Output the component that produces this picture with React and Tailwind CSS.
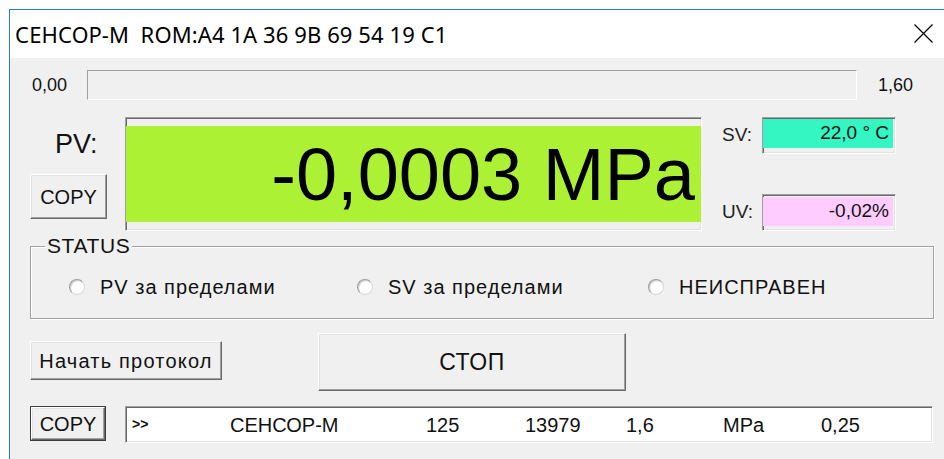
import React from "react";

// classic win32 bevels
const raised =
  "border border-t-white border-l-white border-r-[#696969] border-b-[#696969] shadow-[inset_-1px_-1px_0_#a0a0a0,inset_1px_1px_0_#e3e3e3]";
const sunken =
  "border border-t-[#a0a0a0] border-l-[#a0a0a0] border-r-white border-b-white shadow-[inset_1px_1px_0_#696969,inset_-1px_-1px_0_#e3e3e3]";

const Radio = ({ label, className }) => (
  <div className={`flex items-center ${className}`}>
    <span className="w-[16px] h-[16px] rounded-full bg-white border border-t-[#9a9a9a] border-l-[#9a9a9a] border-r-[#d8d8d8] border-b-[#d8d8d8] shadow-[inset_1px_1px_1px_#c8c8c8]" />
    <span className="ml-[15px] tracking-[1px]">{label}</span>
  </div>
);

const logCols = [
  { text: "СЕНСОР-М", w: "w-[196px]" },
  { text: "125", w: "w-[99px]" },
  { text: "13979", w: "w-[101px]" },
  { text: "1,6", w: "w-[97px]" },
  { text: "MPa", w: "w-[98px]" },
  { text: "0,25", w: "w-[98px]" },
];

export default function App() {
  return (
    <div className="w-[944px] h-[459px] overflow-hidden bg-white font-['Liberation_Sans',Arial,sans-serif] text-[20px] text-[#111]">
      <div className="ml-[9px] mt-[9px] w-[950px] h-[470px] border border-[#2b7bd6] bg-[#f0f0f0]">
        {/* title bar */}
        <div className="h-[48px] bg-white flex items-center justify-between pl-[5px] pr-[25px]">
          <span className="font-['Noto_Sans',sans-serif] text-[22px] whitespace-pre text-black tracking-[0.1px]">
            СЕНСОР-М  ROM:A4 1A 36 9B 69 54 19 C1
          </span>
          <svg width="19" height="19" viewBox="0 0 19 19" className="mt-[-2px]">
            <path d="M0.5 0.5 L18.5 18.5 M18.5 0.5 L0.5 18.5" stroke="#000" strokeWidth="1.2" fill="none" />
          </svg>
        </div>

        {/* scale bar */}
        <div className="flex items-center mt-[12px] h-[30px] pl-[22px]">
          <span className="w-[55px] text-[18px]">0,00</span>
          <div className="w-[770px] h-[30px] border border-t-[#a0a0a0] border-l-[#a0a0a0] border-r-white border-b-white" />
          <span className="ml-[21px] text-[18px]">1,60</span>
        </div>

        {/* PV / SV / UV */}
        <div className="flex items-start mt-[17px] pl-[20px]">
          <div className="w-[77px] flex flex-col">
            <span className="mt-[12px] pl-[25px] text-[27px] leading-[30px]">PV:</span>
            <button className={`mt-[15px] w-[77px] h-[45px] bg-[#f0f0f0] text-[20px] ${raised}`}>COPY</button>
          </div>
          <div className={`ml-[18px] w-[577px] h-[114px] py-[8px] ${sunken} bg-[#f0f0f0]`}>
            <div className="h-full bg-[#adf134] flex items-center justify-end pr-[6px]">
              <span className="text-[74px] leading-none mt-[2px] text-black">-0,0003 MPa</span>
            </div>
          </div>
          <div className="ml-[20px] flex flex-col">
            <div className="flex items-center h-[37px]">
              <span className="w-[40px] text-[19px] text-[#222]">SV:</span>
              <div className={`w-[134px] h-[37px] pb-[6px] pr-[2px] ${sunken} bg-[#f0f0f0]`}>
                <div className="h-full bg-[#34f6c3] flex items-center justify-end pr-[4px] text-[19px] mt-[1px]">
                  22,0 ° C
                </div>
              </div>
            </div>
            <div className="flex items-center h-[37px] mt-[40px]">
              <span className="w-[40px] text-[19px] text-[#222]">UV:</span>
              <div className={`w-[134px] h-[37px] pt-[2px] pb-[4px] pr-[2px] ${sunken} bg-[#f0f0f0]`}>
                <div className="h-full bg-[#ffccff] flex items-center justify-end pr-[4px] text-[19px]">
                  -0,02%
                </div>
              </div>
            </div>
          </div>
        </div>

        {/* STATUS group */}
        <div className="ml-[20px] mt-[15px] w-[904px] h-[73px] relative border border-[#a0a0a0] shadow-[inset_1px_1px_0_#fff,1px_1px_0_#fff] flex items-center pl-[38px] pt-[8px]">
          <span className="absolute left-[14px] top-[-13px] bg-[#f0f0f0] px-[2px] text-[21px] leading-[24px] tracking-[0.6px]">STATUS</span>
          <Radio label="PV за пределами" className="w-[288px]" />
          <Radio label="SV за пределами" className="w-[291px]" />
          <Radio label="НЕИСПРАВЕН" />
        </div>

        {/* buttons */}
        <div className="flex items-start mt-[14px] pl-[20px]">
          <button className={`mt-[8px] w-[192px] h-[39px] bg-[#f0f0f0] text-[20px] tracking-[1.2px] ${raised}`}>Начать протокол</button>
          <button className={`ml-[96px] w-[308px] h-[58px] bg-[#f0f0f0] text-[23px] tracking-[0.6px] ${raised}`}>СТОП</button>
        </div>

        {/* log line */}
        <div className="flex items-start mt-[15px] pl-[20px]">
          <button className="w-[76px] h-[35px] border border-[#3c3c3c] bg-[#f0f0f0] p-0">
            <span className={`flex items-center justify-center w-full h-full text-[20px] ${raised}`}>COPY</span>
          </button>
          <div className={`ml-[19px] w-[808px] h-[37px] bg-white flex items-center pl-[6px] text-[20px] ${sunken}`}>
            <span className="w-[98px] font-bold text-[14px]">&gt;&gt;</span>
            {logCols.map((c) => (
              <span key={c.text} className={c.w}>
                {c.text}
              </span>
            ))}
          </div>
        </div>
      </div>
    </div>
  );
}
